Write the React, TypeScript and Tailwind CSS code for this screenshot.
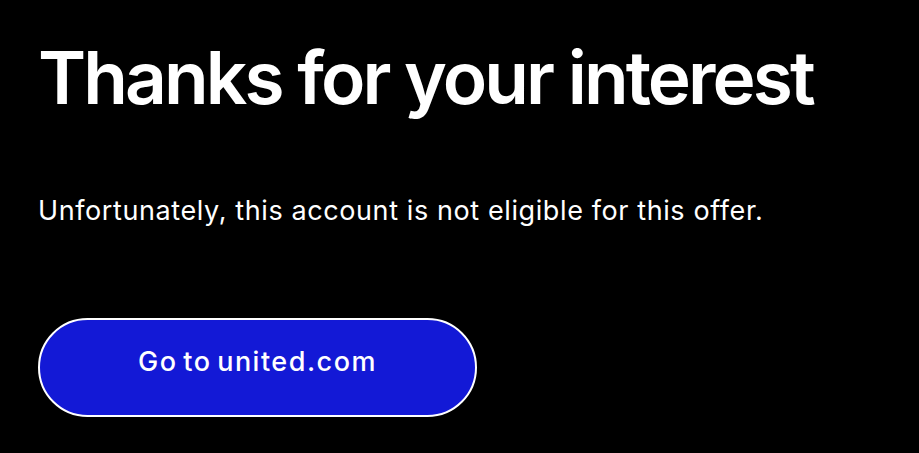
export default function App() {
  return (
    <div
      className="min-h-screen w-full bg-black text-white px-[38px] pt-[34px]"
      style={{ fontFamily: "Inter, 'Noto Sans', sans-serif" }}
    >
      <h1 className="text-[73px] leading-[88px] font-semibold tracking-[-2.9px]">
        Thanks for your interest
      </h1>
      <p className="mt-[72px] text-[27px] leading-[34px] tracking-[0.6px]">
        Unfortunately, this account is not eligible for this offer.
      </p>
      <button className="mt-[90px] flex h-[99px] w-[439px] items-center justify-center rounded-full border-2 border-white bg-[#1319d6] pb-[10px] text-[27px] font-medium tracking-[1.5px] [word-spacing:-3px] text-white">
        Go to united.com
      </button>
    </div>
  );
}
